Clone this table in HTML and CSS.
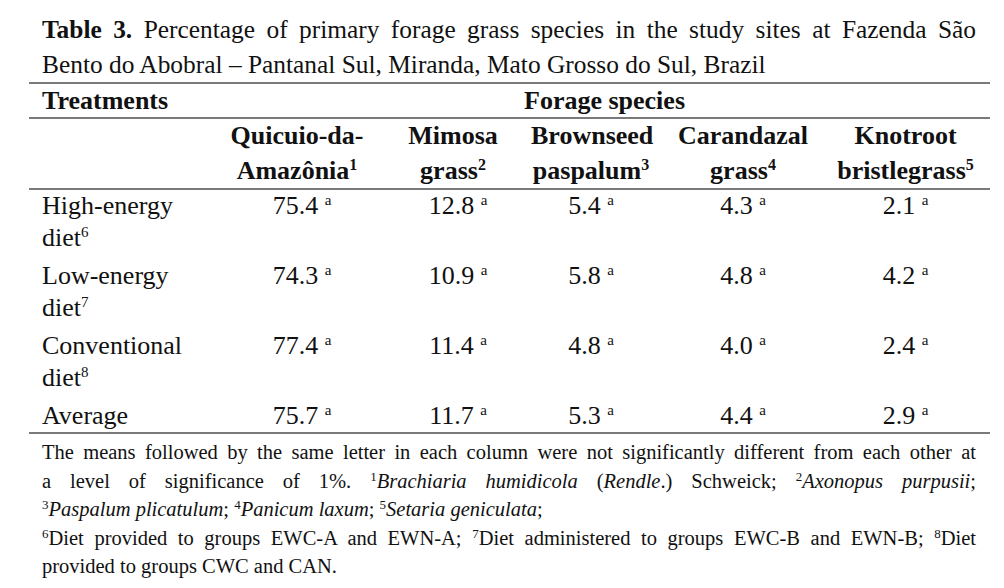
FILE: index.html
```html
<!DOCTYPE html>
<html lang="en">
<head>
<meta charset="utf-8">
<title>Table 3 – Forage grass species</title>
<link rel="stylesheet" href="styles.css">
</head>
<body>
<div class="page">
  <div class="caption">
    <span class="line jl"><b>Table 3.</b> Percentage of primary forage grass species in the study sites at Fazenda São</span>
    <span class="line">Bento do Abobral – Pantanal Sul, Miranda, Mato Grosso do Sul, Brazil</span>
  </div>
  <table class="data">
    <colgroup>
      <col class="c-treat"><col class="c-1"><col class="c-2"><col class="c-3"><col class="c-4"><col class="c-5">
    </colgroup>
    <thead>
      <tr class="head-top">
        <th class="treat">Treatments</th>
        <th class="group" colspan="5">Forage species</th>
      </tr>
      <tr class="head-sub">
        <th class="treat"></th>
        <th>Quicuio-da-<br>Amazônia<sup>1</sup></th>
        <th>Mimosa<br>grass<sup>2</sup></th>
        <th>Brownseed<br>paspalum<sup>3</sup></th>
        <th>Carandazal<br>grass<sup>4</sup></th>
        <th class="last">Knotroot<br>bristlegrass<sup>5</sup></th>
      </tr>
    </thead>
    <tbody>
      <tr>
        <td class="treat">High-energy<br>diet<sup>6</sup></td>
        <td class="v1">75.4 <sup>a</sup></td>
        <td class="v2">12.8 <sup>a</sup></td>
        <td>5.4 <sup>a</sup></td>
        <td>4.3 <sup>a</sup></td>
        <td class="last">2.1 <sup>a</sup></td>
      </tr>
      <tr>
        <td class="treat">Low-energy<br>diet<sup>7</sup></td>
        <td class="v1">74.3 <sup>a</sup></td>
        <td class="v2">10.9 <sup>a</sup></td>
        <td>5.8 <sup>a</sup></td>
        <td>4.8 <sup>a</sup></td>
        <td class="last">4.2 <sup>a</sup></td>
      </tr>
      <tr>
        <td class="treat">Conventional<br>diet<sup>8</sup></td>
        <td class="v1">77.4 <sup>a</sup></td>
        <td class="v2">11.4 <sup>a</sup></td>
        <td>4.8 <sup>a</sup></td>
        <td>4.0 <sup>a</sup></td>
        <td class="last">2.4 <sup>a</sup></td>
      </tr>
      <tr class="avg">
        <td class="treat">Average</td>
        <td class="v1">75.7 <sup>a</sup></td>
        <td class="v2">11.7 <sup>a</sup></td>
        <td>5.3 <sup>a</sup></td>
        <td>4.4 <sup>a</sup></td>
        <td class="last">2.9 <sup>a</sup></td>
      </tr>
    </tbody>
  </table>
  <div class="notes">
    <span class="line jl">The means followed by the same letter in each column were not significantly different from each other at</span>
    <span class="line jl">a level of significance of 1%. <sup>1</sup><i>Brachiaria humidicola</i> (<i>Rendle</i>.) Schweick; <sup>2</sup><i>Axonopus purpusii</i>;</span>
    <span class="line"><sup>3</sup><i>Paspalum plicatulum</i>; <sup>4</sup><i>Panicum laxum</i>; <sup>5</sup><i>Setaria geniculata</i>;</span>
    <span class="line jl"><sup>6</sup>Diet provided to groups EWC-A and EWN-A; <sup>7</sup>Diet administered to groups EWC-B and EWN-B; <sup>8</sup>Diet</span>
    <span class="line">provided to groups CWC and CAN.</span>
  </div>
</div>
</body>
</html>
```

FILE: styles.css
```css
html, body {
  margin: 0;
  padding: 0;
  background: #ffffff;
}

body {
  color: #111111;
  font-family: "Liberation Serif", "Times New Roman", serif;
}

.page {
  margin-left: 29px;
  width: 961px;
  padding-top: 12px;
}

.line {
  display: block;
  white-space: nowrap;
}

.jl {
  text-align: justify;
  text-align-last: justify;
  white-space: normal;
}

.caption {
  padding: 0 14px 0 13px;
  font-size: 25.4px;
  line-height: 35px;
  border-bottom: 2px solid #7a7a7a;
}

.data {
  width: 961px;
  border-collapse: collapse;
  table-layout: fixed;
  font-size: 26px;
}

.c-treat { width: 190px; }
.c-1 { width: 156px; }
.c-2 { width: 156px; }
.c-3 { width: 120px; }
.c-4 { width: 184px; }
.c-5 { width: 155px; }

.data th,
.data td {
  padding: 0;
  text-align: center;
  vertical-align: top;
  white-space: nowrap;
}

.data th {
  font-weight: bold;
}

.data .treat {
  text-align: left;
  padding-left: 13px;
}

.data .last {
  padding-right: 14px;
}

.head-top th {
  line-height: 33px;
  border-bottom: 2px solid #7a7a7a;
}

.head-top .group {
  padding-left: 14px;
  padding-right: 14px;
}

.head-sub th {
  line-height: 34.5px;
  border-bottom: 2px solid #7a7a7a;
}

.data tbody td {
  line-height: 32px;
  padding-bottom: 6px;
}

.data tbody td.treat {
  font-weight: normal;
}

.data td.v1,
.data td.v2 {
  padding-left: 10px;
}

.data tbody .avg td {
  padding-bottom: 0;
  border-bottom: 2px solid #7a7a7a;
}

.data sup {
  font-size: 15px;
  line-height: 0;
  vertical-align: 9px;
}

.data th sup {
  font-size: 16px;
}

.notes {
  padding: 4px 14px 0 13px;
  font-size: 20.5px;
  line-height: 28.5px;
}

.notes sup {
  font-size: 13px;
  line-height: 0;
  vertical-align: 7px;
}
```
